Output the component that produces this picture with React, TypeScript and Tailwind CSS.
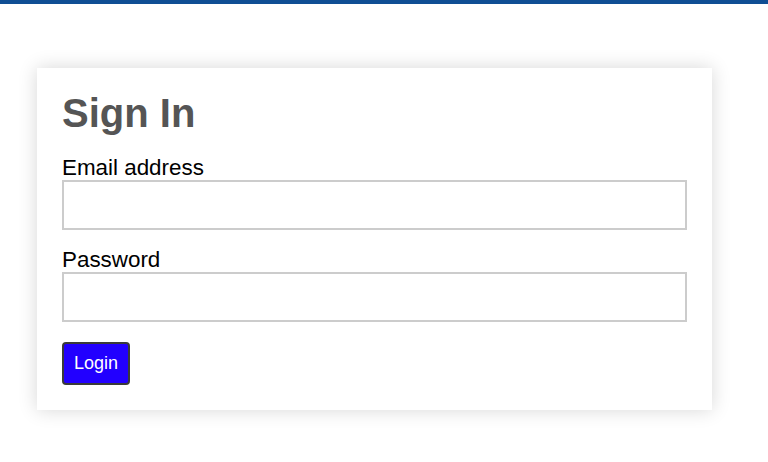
export default function App() {
  return (
    <div className="min-h-[462px] bg-white" style={{ fontFamily: '"Liberation Sans", Arial, sans-serif' }}>
      <div className="h-[4px] bg-[#0f4e94]" />
      <div className="ml-[37px] mt-[64px] w-[675px] bg-white px-[25px] pt-[22px] pb-[25px] shadow-[0_0_18px_rgba(0,0,0,0.16)]">
        <h1 className="mb-[19px] text-[40px] font-bold leading-[46px] text-[#555555]">Sign In</h1>
        <form onSubmit={(e) => e.preventDefault()}>
          <label htmlFor="email" className="block text-[22.4px] leading-[25px] text-black">
            Email address
          </label>
          <input
            id="email"
            type="email"
            className="block h-[50px] w-full border-2 border-[#cccccc] bg-white px-2 text-lg outline-none"
          />
          <label htmlFor="password" className="mt-[17px] block text-[22.4px] leading-[25px] text-black">
            Password
          </label>
          <input
            id="password"
            type="password"
            className="block h-[50px] w-full border-2 border-[#cccccc] bg-white px-2 text-lg outline-none"
          />
          <button
            type="submit"
            className="mt-[20px] h-[43px] rounded-[4px] border-2 border-[#3a3a3a] bg-[#2200ff] px-[10px] text-[18px] text-white"
          >
            Login
          </button>
        </form>
      </div>
    </div>
  )
}
